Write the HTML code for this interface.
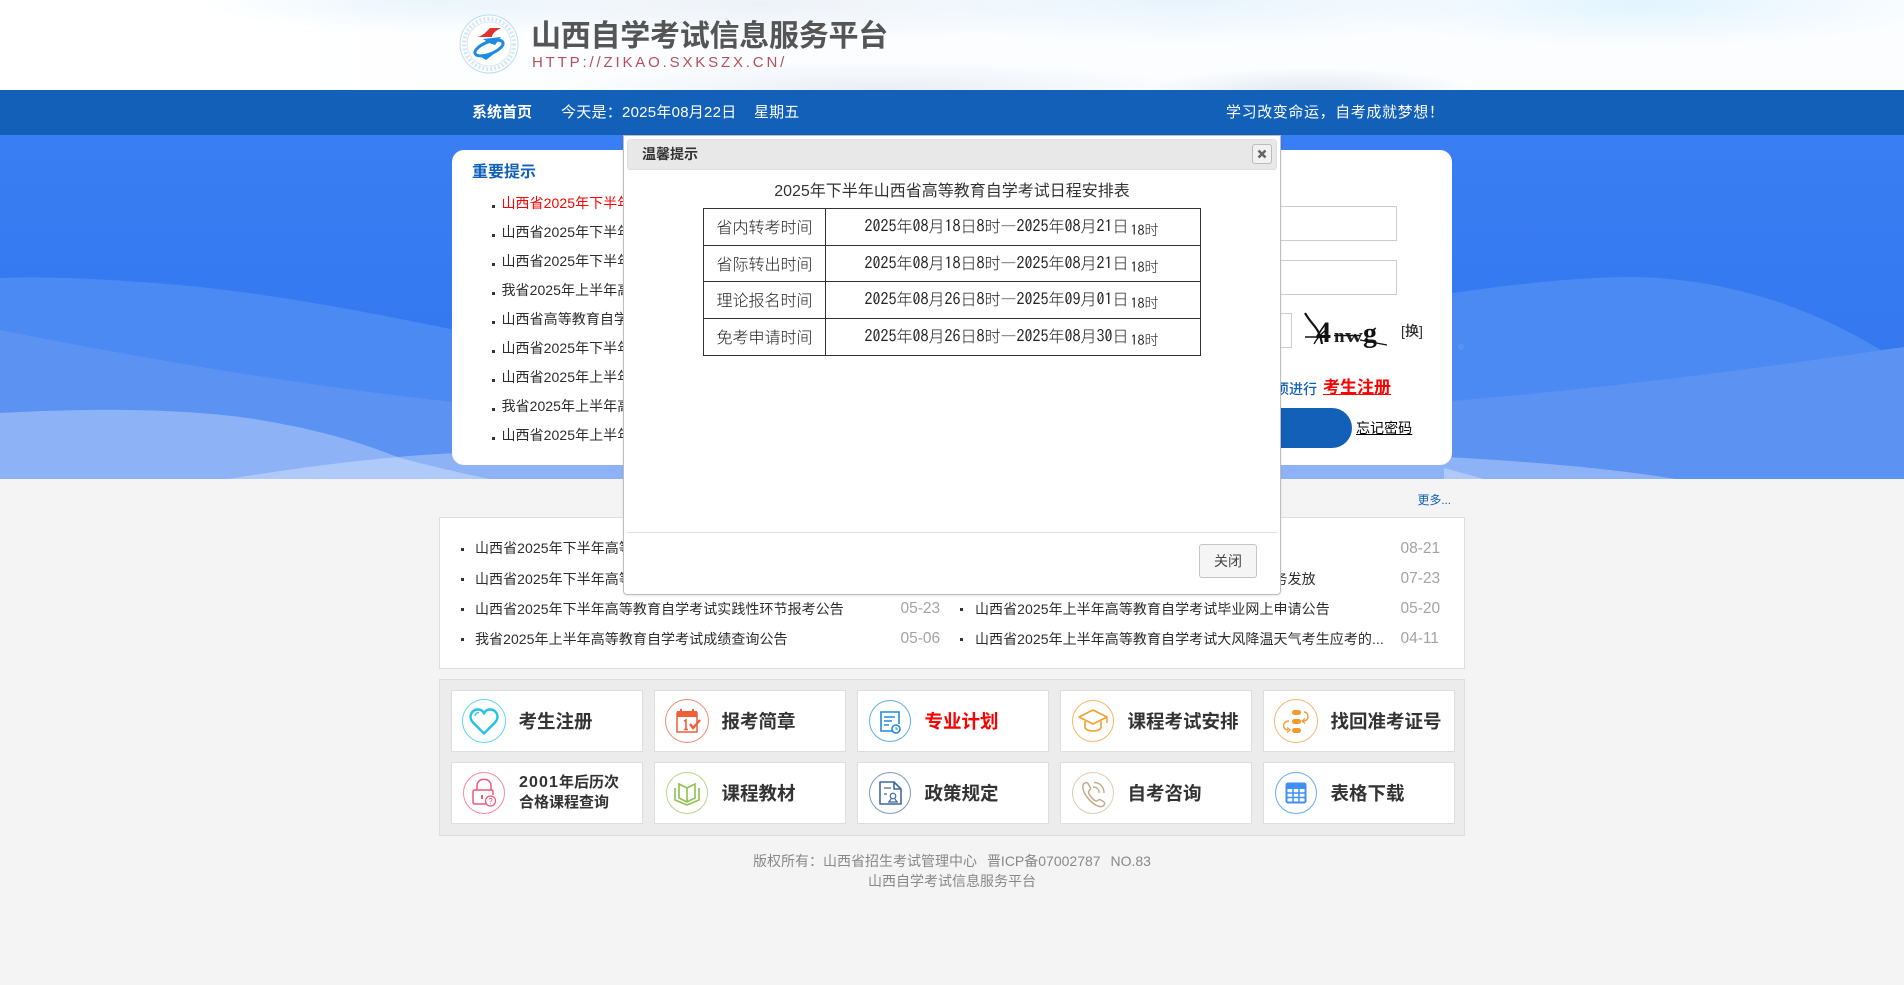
<!DOCTYPE html>
<html lang="zh-CN"><head><meta charset="utf-8"><title>山西自学考试信息服务平台</title>
<style>
*{box-sizing:border-box;margin:0;padding:0}
html,body{width:1904px;height:985px;overflow:hidden;background:#f4f4f4}
body{position:relative;font-family:"Liberation Sans","Noto Sans CJK SC",sans-serif;color:#333}
.a,.t{position:absolute;white-space:nowrap}
.t{font-size:14px;line-height:20px;letter-spacing:.06px;color:#2c2c2c}
#hd{left:0;top:0;width:1904px;height:90px;background:
radial-gradient(ellipse 300px 42px at 1640px 4px,#e2f4ff 0,rgba(226,244,255,0) 100%),
radial-gradient(ellipse 320px 44px at 1180px 0,#e6f4fd 0,rgba(230,244,253,0) 100%),
radial-gradient(ellipse 340px 40px at 760px 4px,#edf2f8 0,rgba(237,242,248,0) 100%),
radial-gradient(ellipse 240px 34px at 440px 0,#e8f5fd 0,rgba(232,245,253,0) 100%),
radial-gradient(ellipse 320px 30px at 880px 92px,#e9eef5 0,rgba(233,238,245,0) 100%),
radial-gradient(ellipse 170px 26px at 1310px 94px,#dfe7f0 0,rgba(223,231,240,0) 100%),
linear-gradient(90deg,#fff 0,#fff 300px,#fbfdff 600px,#fbfdff 100%)}
#nav{left:0;top:90px;width:1904px;height:45px;background:#1260b8}
#bg{left:0;top:135px;width:1904px;height:344px}
#nav .t{color:#fff;font-size:15px;top:13px;letter-spacing:.12px}
.card{left:452px;top:150px;width:1000px;height:315px;background:#fff;border-radius:12px}
.bl{width:3px;height:3px;background:#333}
.in{border:1px solid #ccc;background:#fff}
.dt{font-size:15.5px;color:#a3a3a3;line-height:20px}
.g{background:#fff;border:1px solid #ddd;width:192px;height:62px}
.g .n{position:absolute;left:66.500px;top:16px;font-size:18.500px;font-weight:700;color:#333;line-height:30px;white-space:nowrap}
.g svg{position:absolute;left:10px;top:8px;width:44px;height:44px}
#m{left:623px;top:135px;width:658px;height:460px;background:#fff;border:1px solid #bdbdbd;border-radius:0 0 4px 4px;box-shadow:0 1px 2px rgba(0,0,0,.1)}
#m table{position:absolute;left:79px;top:72px;width:497px;border-collapse:collapse;table-layout:fixed;font-size:16px;color:#222}
#m td{border:1px solid #333;text-align:center;padding:0 0 2px;font-family:"Noto Sans CJK SC","WenQuanYi Zen Hei",sans-serif;font-weight:300;white-space:nowrap}
#m td.d{padding:0 3px 4px 0}
#m td i{font-style:normal;font-family:"IPAGothic","Liberation Sans",monospace}
#m td small{font-size:14px;position:relative;top:3px;margin-left:2px}
</style></head><body>

<div class="a" id="hd"></div>
<svg class="a" style="left:459px;top:14px" width="62" height="60" viewBox="0 0 62 60">
<circle cx="30" cy="30" r="29" fill="#fff" stroke="#bcdcf2" stroke-width="1"/>
<circle cx="30" cy="30" r="25" fill="none" stroke="#a8cfea" stroke-width="4" stroke-dasharray="2 2" opacity=".5"/>
<circle cx="30" cy="30" r="22" fill="#fff" stroke="#cfe4f3" stroke-width=".8"/>
<path d="M18 23 C24 22 27 18 31 14 L42 14 C36 17 33 20 33 23Z" fill="#e0342a"/>
<ellipse cx="30" cy="34" rx="15" ry="6" transform="rotate(-22 30 34)" fill="none" stroke="#1c8be0" stroke-width="3"/>
<path d="M24 25 L42 23 L36 31 L30 29Z M19 41 L36 39 L27 46Z" fill="#1c8be0"/>
</svg>
<div class="a" style="left:531px;top:16px;font-size:30px;font-weight:700;line-height:42px;color:#555;letter-spacing:-.25px">山西自学考试信息服务平台</div>
<div class="a" style="left:532px;top:53px;font-size:15px;line-height:20px;color:#b5505b;letter-spacing:2.83px;font-weight:500">HTTP://ZIKAO.SXKSZX.CN/</div>

<div class="a" id="nav">
<div class="t" style="left:472px;font-weight:700;font-size:15px;letter-spacing:0">系统首页</div>
<div class="t" style="left:561px;letter-spacing:.25px">今天是：2025年08月22日</div>
<div class="t" style="left:754px">星期五</div>
<div class="t" style="left:1226px;letter-spacing:.6px">学习改变命运，自考成就梦想！</div>
</div>

<svg class="a" id="bg" viewBox="0 135 1904 344" width="1904" height="344">
<defs><linearGradient id="bb" x1="0" y1="0" x2="0" y2="1"><stop offset="0" stop-color="#3a7ef3"/><stop offset="1" stop-color="#3174ee"/></linearGradient></defs>
<rect x="0" y="135" width="1904" height="344" fill="url(#bb)"/>
<path d="M0 278 C40 276 120 279 200 287 C300 298 380 315 460 331 L1440 295 C1500 286 1570 277 1635 277 C1740 279 1830 315 1904 365 V479 H0Z" fill="#4b8af3"/>
<path d="M0 330 C150 360 300 385 452 402 C700 420 1200 420 1452 401 C1640 385 1780 365 1904 347 V479 H0Z" fill="#5c93f2"/>
<path d="M0 413 C90 408 190 408 260 420 C320 430 360 442 400 458 C430 466 470 475 490 479 H0Z" fill="#fff" fill-opacity=".3"/>
<path d="M228 479 C290 469 380 456 460 453 L1444 457 C1510 460 1610 468 1676 479Z" fill="#fff" fill-opacity=".3"/>
<path d="M1444 468 L1484 479 H1444Z" fill="#fff" fill-opacity=".3"/>
<circle cx="1461" cy="347" r="3" fill="#5c93f2"/>
</svg>

<div class="a card"></div>
<div class="a" style="left:472px;top:162px;font-size:16px;line-height:22px;font-weight:700;color:#1260b8">重要提示</div>

<div class="a bl" style="left:492px;top:205px"></div><div class="t" style="left:501.500px;top:193px;color:#f00">山西省2025年下半年高等教育自学考试</div>
<div class="a bl" style="left:492px;top:234px"></div><div class="t" style="left:501.500px;top:222px">山西省2025年下半年高等教育自学考试</div>
<div class="a bl" style="left:492px;top:263px"></div><div class="t" style="left:501.500px;top:251px">山西省2025年下半年高等教育自学考试</div>
<div class="a bl" style="left:492px;top:292px"></div><div class="t" style="left:501.500px;top:280px">我省2025年上半年高等教育自学考试</div>
<div class="a bl" style="left:492px;top:321px"></div><div class="t" style="left:501.500px;top:309px">山西省高等教育自学考试委员会</div>
<div class="a bl" style="left:492px;top:350px"></div><div class="t" style="left:501.500px;top:338px">山西省2025年下半年高等教育自学考试</div>
<div class="a bl" style="left:492px;top:379px"></div><div class="t" style="left:501.500px;top:367px">山西省2025年上半年高等教育自学考试</div>
<div class="a bl" style="left:492px;top:408px"></div><div class="t" style="left:501.500px;top:396px">我省2025年上半年高等教育自学考试</div>
<div class="a bl" style="left:492px;top:437px"></div><div class="t" style="left:501.500px;top:425px">山西省2025年上半年高等教育自学考试</div>

<div class="a in" style="left:1100px;top:206px;width:297px;height:35px"></div>
<div class="a in" style="left:1100px;top:260px;width:297px;height:35px"></div>
<div class="a in" style="left:1100px;top:313px;width:192px;height:35px"></div>
<svg class="a" style="left:1300px;top:308px" width="92" height="44" viewBox="0 0 92 44">
<text x="16" y="34" font-family="Liberation Serif,serif" font-size="30" font-weight="700" fill="#111">4</text>
<text x="34" y="34" font-family="Liberation Serif,serif" font-size="19" font-weight="700" fill="#222">n</text>
<text x="45" y="34" font-family="Liberation Serif,serif" font-size="19" font-weight="700" fill="#222" textLength="18" lengthAdjust="spacingAndGlyphs">w</text>
<text x="63" y="34" font-family="Liberation Serif,serif" font-size="28" font-weight="700" fill="#111">g</text>
<path d="M5 5 C9 12 13 16 16 20 C19 24 21 30 22 36" fill="none" stroke="#111" stroke-width="2.200"/>
<path d="M5 29 H28 M34 27.500 H60" stroke="#111" stroke-width="1.600" fill="none"/>
<path d="M14 36 C18 28 24 24 28 20 M60 32 L87 37" stroke="#111" stroke-width="1.300" fill="none"/>
</svg>
<div class="t" style="left:1401px;top:321px;font-weight:500">[换]</div>
<div class="t" style="left:1275px;top:379px;color:#1260b8;font-weight:500">须进行</div>
<div class="a" style="left:1323px;top:376px;font-size:17px;line-height:24px;font-weight:700;color:#f00;text-decoration:underline">考生注册</div>
<div class="a" style="left:1100px;top:408px;width:252px;height:40px;border-radius:0 20px 20px 0;background:#1260b8"></div>
<div class="t" style="left:1356px;top:418px;color:#000;text-decoration:underline">忘记密码</div>

<div class="a" style="left:1417.500px;top:491px;font-size:12px;line-height:18px;color:#1260b8;letter-spacing:-.1px">更多...</div>
<div class="a" style="left:439px;top:517px;width:1026px;height:152px;background:#fff;border:1px solid #ddd"></div>

<div class="a bl" style="left:461px;top:548px"></div><div class="t" style="left:475px;top:538px">山西省2025年下半年高等教育自学考试</div>
<div class="a bl" style="left:461px;top:578px"></div><div class="t" style="left:475px;top:568.500px">山西省2025年下半年高等教育自学考试</div>
<div class="a bl" style="left:461px;top:608px"></div><div class="t" style="left:475px;top:599px">山西省2025年下半年高等教育自学考试实践性环节报考公告</div>
<div class="a bl" style="left:461px;top:638px"></div><div class="t" style="left:475px;top:629px">我省2025年上半年高等教育自学考试成绩查询公告</div>
<div class="a dt" style="left:900.500px;top:599px">05-23</div>
<div class="a dt" style="left:900.500px;top:629px">05-06</div>

<div class="t" style="left:975px;top:568.500px">山西省2025年上半年高等教育自学考试毕业证业务发放</div>
<div class="a bl" style="left:960px;top:608px"></div><div class="t" style="left:975px;top:599px">山西省2025年上半年高等教育自学考试毕业网上申请公告</div>
<div class="a bl" style="left:960px;top:638px"></div><div class="t" style="left:975px;top:629px">山西省2025年上半年高等教育自学考试大风降温天气考生应考的...</div>
<div class="a dt" style="left:1400.500px;top:539px">08-21</div>
<div class="a dt" style="left:1400.500px;top:569px">07-23</div>
<div class="a dt" style="left:1400.500px;top:599px">05-20</div>
<div class="a dt" style="left:1400.500px;top:629px">04-11</div>

<div class="a" style="left:439px;top:679px;width:1026px;height:157px;background:#ececec;border:1px solid #ddd"></div>

<div class="a g" style="left:451px;top:690px"><svg viewBox="0 0 44 44"><circle cx="22" cy="22" r="21.500" fill="none" stroke="#5fd4ee"/><path d="M22 34.500 L10.500 23 C6 17 10 10.500 16 10.500 C19 10.500 21 12 22 14.500 C23 12 25 10.500 28 10.500 C34 10.500 38 17 33.500 23Z" fill="none" stroke="#22c3ea" stroke-width="2.400" stroke-linejoin="round"/><path d="M13 17 C13 15 15 13.500 17 13.500" fill="none" stroke="#22c3ea" stroke-width="1.200"/></svg><span class="n">考生注册</span></div>
<div class="a g" style="left:654px;top:690px"><svg viewBox="0 0 44 44"><circle cx="22" cy="22" r="21.500" fill="none" stroke="#f48a70"/><path d="M12 14 H32 V33 H12Z" fill="none" stroke="#ee5f38" stroke-width="1.500"/><path d="M12 12 H32 V18 H12Z" fill="#ee5f38"/><path d="M16 10 V14 M28 10 V14" stroke="#ee5f38" stroke-width="2"/><path d="M19 22 L21 21 V30 M19 30.500 H23" fill="none" stroke="#ee5f38" stroke-width="1.600"/><path d="M25 25 L28 29 L35 21" fill="none" stroke="#ee5f38" stroke-width="2.400"/></svg><span class="n">报考简章</span></div>
<div class="a g" style="left:857px;top:690px"><svg viewBox="0 0 44 44"><circle cx="22" cy="22" r="20.500" fill="none" stroke="#5cb0ec"/><path d="M26 32 H13 V13 H31 V25" fill="none" stroke="#1f8ae2" stroke-width="1.600"/><path d="M16 18 H27 M16 22 H24 M16 26 H21" stroke="#1f8ae2" stroke-width="1.400"/><circle cx="28" cy="30" r="4" fill="#fff" stroke="#1f8ae2" stroke-width="1.600"/><path d="M28 28 V30 H30" stroke="#1f8ae2" fill="none"/></svg><span class="n" style="color:#f00">专业计划</span></div>
<div class="a g" style="left:1060px;top:690px"><svg viewBox="0 0 44 44"><circle cx="22" cy="22" r="20.500" fill="none" stroke="#f7b665"/><path d="M22 11 L36 18 L22 25 L8 18Z" fill="none" stroke="#f4a02e" stroke-width="1.600" stroke-linejoin="round"/><path d="M14 22 V29 C17 33 27 33 30 29 V22" fill="none" stroke="#f4a02e" stroke-width="1.600"/><path d="M36 18 V24" stroke="#f4a02e" stroke-width="1.400"/></svg><span class="n">课程考试安排</span></div>
<div class="a g" style="left:1263px;top:690px"><svg viewBox="0 0 44 44"><circle cx="22" cy="22" r="21.500" fill="none" stroke="#f6b56e"/><rect x="18" y="11" width="9" height="5" rx="2.500" fill="#f39a2d"/><rect x="18" y="20" width="9" height="5" rx="2.500" fill="#f39a2d"/><rect x="18" y="29" width="9" height="5" rx="2.500" fill="#f39a2d"/><path d="M30 13 C35 13 36 22 29 22" fill="none" stroke="#f39a2d" stroke-width="1.400"/><path d="M15 22 C8 22 8 31 14 31" fill="none" stroke="#f39a2d" stroke-width="1.400"/><path d="M13 28.500 L16 31 L13 33.500 M31 19.500 L28 22 L31 24.500" fill="none" stroke="#f39a2d" stroke-width="1.200"/></svg><span class="n">找回准考证号</span></div>

<div class="a g" style="left:451px;top:762px"><svg viewBox="0 0 44 44"><circle cx="22" cy="22" r="20.500" fill="none" stroke="#f78aa2"/><path d="M15 19 V15 C15 6 29 6 29 15 V19" fill="none" stroke="#f0557a" stroke-width="1.500"/><path d="M26 33 H13 Q11 33 11 31 V21 Q11 19 13 19 H29 Q31 19 31 21 V24" fill="none" stroke="#f0557a" stroke-width="1.500"/><path d="M20 24 V28" stroke="#f0557a" stroke-width="2"/><circle cx="28.500" cy="30" r="5" fill="#fff" stroke="#f0557a" stroke-width="1.200"/><path d="M27 28.500 C27.500 26.800 30.500 27.300 30 29 C29.700 30 28.500 30 28.500 31.300 M28.500 32.300 V33" fill="none" stroke="#f0557a" stroke-width=".9"/></svg>
<span class="n" style="font-size:15px;line-height:20px;top:10px;left:67px"><span style="font-size:16px;letter-spacing:1.100px">2001</span>年后历次<br>合格课程查询</span></div>
<div class="a g" style="left:654px;top:762px"><svg viewBox="0 0 44 44"><circle cx="22" cy="22" r="20.500" fill="none" stroke="#b7d68b"/><path d="M10 17 V29 L22 34 L34 29 V17" fill="none" stroke="#8fc04c" stroke-width="1.600"/><path d="M14 13 L22 17 L30 13 V27 L22 31 L14 27Z M22 17 V31" fill="none" stroke="#8fc04c" stroke-width="1.600"/></svg><span class="n">课程教材</span></div>
<div class="a g" style="left:857px;top:762px"><svg viewBox="0 0 44 44"><circle cx="22" cy="22" r="20.500" fill="none" stroke="#7d9abb"/><path d="M12 11 H26 L33 18 V33 H12Z M26 11 V18 H33" fill="none" stroke="#3f6a9a" stroke-width="1.600" stroke-linejoin="round"/><path d="M16 17 H23 M16 23 H19" stroke="#3f6a9a" stroke-width="1.300"/><circle cx="25" cy="25" r="2.800" fill="none" stroke="#3f6a9a" stroke-width="1.200"/><path d="M20 31 H30 M23 28 L21 31 M27 28 L29 31" stroke="#3f6a9a" stroke-width="1.200" fill="none"/></svg><span class="n">政策规定</span></div>
<div class="a g" style="left:1060px;top:762px"><svg viewBox="0 0 44 44"><circle cx="22" cy="22" r="20.500" fill="none" stroke="#dccdb6"/><path d="M12 14 C13 11.500 16 11 17 12.500 L19.500 17 C20 18.500 17.500 19.500 17.500 21 C18 24 22 29 25 30 C26.500 30.500 27.500 28 29 28.500 L33 31 C34.500 32.500 33 35 31 35.500 C24 37 10 23 12 14Z" fill="none" stroke="#c4ad8a" stroke-width="1.500"/><path d="M22 16 C26 16 28 18.500 28 22 M23 11.500 C29 11.500 33 16 33 22" fill="none" stroke="#c4ad8a" stroke-width="1.400"/></svg><span class="n">自考咨询</span></div>
<div class="a g" style="left:1263px;top:762px"><svg viewBox="0 0 44 44"><circle cx="22" cy="22" r="20.500" fill="none" stroke="#6aa8f5"/><rect x="11.500" y="11.500" width="21" height="21" rx="2.500" fill="#3f8ff5"/><path d="M13.500 18 H30.500 V30.500 H13.500Z" fill="#fff"/><path d="M19 18 V31 M25 18 V31 M13 22 H31 M13 26.500 H31" stroke="#3f8ff5" stroke-width="1.500"/></svg><span class="n">表格下载</span></div>

<div class="a" style="left:0;top:851px;width:1904px;text-align:center;font-size:14px;line-height:20px;color:#888">版权所有：山西省招生考试管理中心<span style="margin:0 3px"> </span>晋ICP备07002787<span style="margin:0 3px"> </span>NO.83</div>
<div class="a" style="left:0;top:871px;width:1904px;text-align:center;font-size:14px;line-height:20px;color:#888">山西自学考试信息服务平台</div>

<div class="a" id="m">
<div class="a" style="left:3px;top:3px;width:650px;height:31px;background:#e8e8e8;border:1px solid #e0e0e0;border-radius:3px"></div>
<div class="a" style="left:18px;top:8px;font-size:14px;line-height:20px;font-weight:700;color:#333">温馨提示</div>
<div class="a" style="left:628px;top:8px;width:20px;height:20px;background:#f2f2f2;border:1px solid #bbb;border-radius:3px"><svg style="position:absolute;left:4px;top:4px" width="10" height="10" viewBox="0 0 10 10"><path d="M1.500 1.500 L8.500 8.500 M8.500 1.500 L1.500 8.500" stroke="#666" stroke-width="2.600" fill="none"/></svg></div>
<div class="a" style="left:0;top:45px;width:656px;text-align:center;font-size:16px;line-height:22px;color:#333">2025年下半年山西省高等教育自学考试日程安排表</div>
<table><colgroup><col style="width:122px"><col style="width:375px"></colgroup>
<tr style="height:37px"><td>省内转考时间</td><td class="d"><i>2025</i>年<i>08</i>月<i>18</i>日<i>8</i>时—<i>2025</i>年<i>08</i>月<i>21</i>日<small><i>18</i>时</small></td></tr>
<tr style="height:36px"><td>省际转出时间</td><td class="d"><i>2025</i>年<i>08</i>月<i>18</i>日<i>8</i>时—<i>2025</i>年<i>08</i>月<i>21</i>日<small><i>18</i>时</small></td></tr>
<tr style="height:37px"><td>理论报名时间</td><td class="d"><i>2025</i>年<i>08</i>月<i>26</i>日<i>8</i>时—<i>2025</i>年<i>09</i>月<i>01</i>日<small><i>18</i>时</small></td></tr>
<tr style="height:37px"><td>免考申请时间</td><td class="d"><i>2025</i>年<i>08</i>月<i>26</i>日<i>8</i>时—<i>2025</i>年<i>08</i>月<i>30</i>日<small><i>18</i>时</small></td></tr>
</table>
<div class="a" style="left:3px;top:396px;width:650px;height:1px;background:#ddd"></div>
<div class="a" style="left:575px;top:408px;width:58px;height:34px;background:#f5f5f5;border:1px solid #c4c4c4;border-radius:3px;text-align:center;font-size:14px;line-height:32px;color:#444">关闭</div>
</div>
</body></html>
